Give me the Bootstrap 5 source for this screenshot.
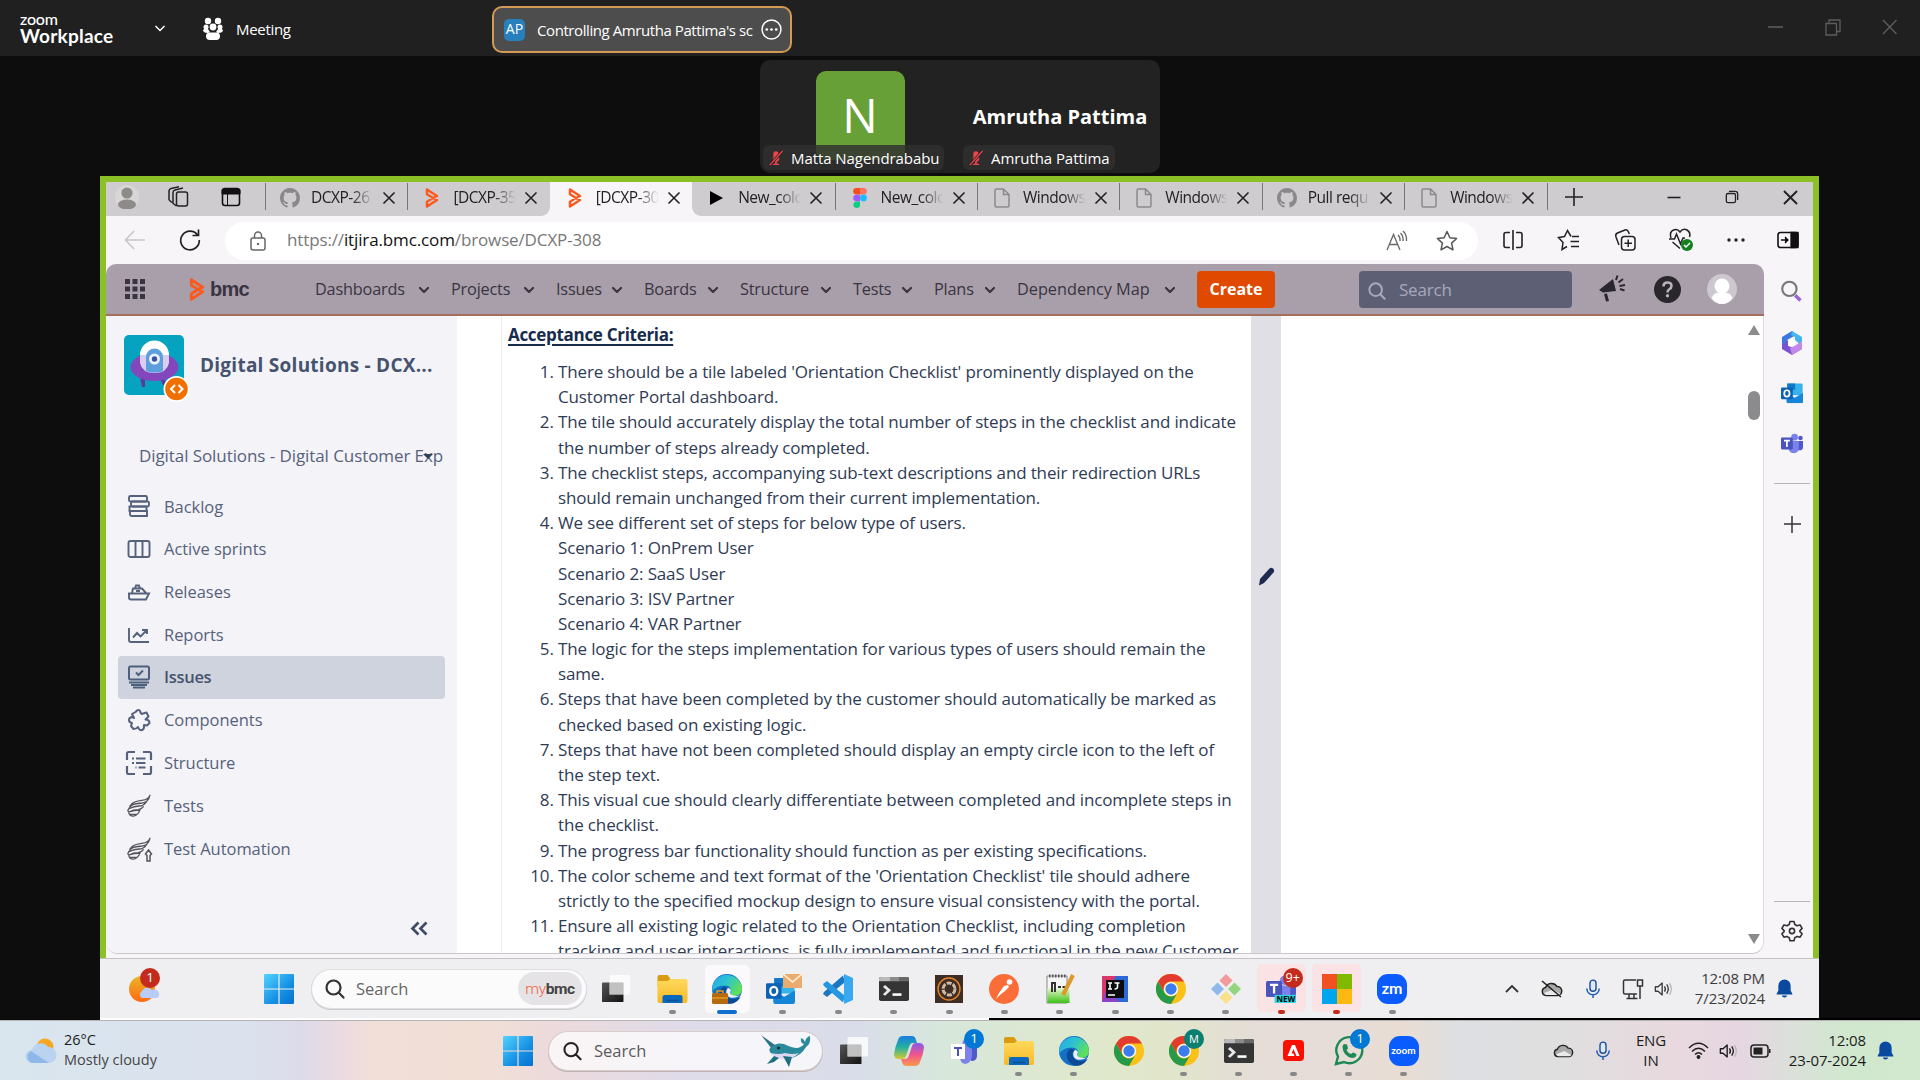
<!DOCTYPE html>
<html lang="en">
<head>
<meta charset="utf-8">
<meta name="viewport" content="width=device-width, initial-scale=1">
<title>Zoom Workplace</title>
<link href="https://cdn.jsdelivr.net/npm/bootstrap@5.3.0/dist/css/bootstrap.min.css" rel="stylesheet">
<style>
body{width:1920px;height:1080px;overflow:hidden;background:#0d0d0d;font-family:"Open Sans","Noto Sans",sans-serif;color:#222;line-height:1.2}
svg{display:block;flex:none;overflow:visible}
.i12{width:12px;height:12px}.i16{width:16px;height:16px}.i20{width:20px;height:20px}.i22{width:22px;height:22px}.i24{width:24px;height:24px}.i28{width:28px;height:28px}.i30{width:30px;height:30px}
.spot{display:flex;align-items:center;justify-content:center;flex:none;position:relative}
/* zoom bar */
.zoombar{height:56px;background:#202020;color:#fff}
.zlogo{width:110px;padding-top:0}
.zlogo .z1{font:500 16px/15px Lato,sans-serif;letter-spacing:-.2px}
.zlogo .z2{font:700 19px/20px Lato,sans-serif;letter-spacing:.25px}
.zmeet{width:255px;font-size:15px;letter-spacing:-.3px;margin-left:12px;padding-top:2px}
.share-pill{width:300px;height:47px;margin-left:35px;margin-top:3px;border:2px solid #d39a55;border-radius:10px;background:#4d4d4d;font-size:15px;padding-left:10px}
.share-pill .ap{width:21px;height:22px;border-radius:5px;background:#287fbd;font-size:14px}
.share-text{margin-left:12px;letter-spacing:-.42px}
.zbtns{color:#5c5c5c;gap:41px;margin-right:22px;height:50px}
/* participants */
.people{width:400px;height:113px;margin:4px 0 3px 760px;background:#222;border-radius:10px;color:#fff;overflow:hidden}
.people .tile{width:200px;height:113px;position:relative}
.bigN{width:89px;height:89px;background:#68a038;border-radius:10px;font-size:47px;margin-top:11px}
.bigname{font-weight:700;font-size:20px;letter-spacing:0;margin-top:45px}
.nametag{position:absolute;left:3px;bottom:3px;height:25px;border-radius:6px;background:rgba(48,48,48,.82);font-size:15px;letter-spacing:-.07px;padding:0 5px 0 5px;gap:7px}
/* shared screen */
.shared{width:1719px;margin-left:100px;height:842px}
.edgewin{height:782px;border:6px solid #8cc027;border-bottom:0;background:#f8f5f9}
.tabs{height:34px;background:#cfcccf;color:#222}
.tabs>.spot{padding-bottom:4px}
.tabitem{width:142.4px;height:34px;padding:0 0 3px 14px;font-size:15.5px;border-left:1.5px solid #77757a;border-image:linear-gradient(#cfcccf 6%,#77757a 6%,#77757a 80%,#cfcccf 80%) 1}
.tabitem .ttl{width:68px;margin-left:11px;margin-right:2px;white-space:nowrap;letter-spacing:-.5px;-webkit-mask-image:linear-gradient(90deg,#000 60%,transparent 92%);mask-image:linear-gradient(90deg,#000 60%,transparent 92%)}
.tabitem.on{background:#f8f5f9;border-image:none;border:0;padding-left:15px}
.tabitem.on + .tabitem{border-image:none;border-left:0;border-bottom-left-radius:9px;padding-left:15px}
.tabitem.pre{border-bottom-right-radius:9px}
.tabs .under{background:#f8f5f9;display:flex}
.tabs .under .tabitem:not(.on){background:#cfcccf}
.tabitem.adder{width:54px;padding:0 0 4px}
.addr{height:48px;color:#222}
.addr .pill{width:1257px;height:38px;margin-top:1px;border-radius:19px;background:#fff;font-size:17px;letter-spacing:-.13px;color:#777}
.addr .pill b{font-weight:400;color:#111}
.jnav{width:1658px;height:52px;background:#a89fab;border-bottom:2px solid #a66e5e;border-radius:10px 10px 0 0;color:#3a3440;font-size:16.3px;letter-spacing:-.2px}
.jnav .mi{justify-content:space-between;padding-right:21px;padding-top:2px}
.jsearch{width:213px;height:37px;border-radius:4px;background:#5d6075;color:#a9a9bb;font-size:17px;padding-top:2px;margin-top:1px}
.btn-create{width:78px;height:37px;background:#e04a00;color:#fff;border-radius:4px;font-weight:700;font-size:16px;padding:0}
.bmctext{font:700 20px "Liberation Sans",sans-serif;letter-spacing:-.8px;margin-left:5px}
.page{width:1658px;height:638px;background:#fff;border-bottom:1px solid #c9c7cc;border-right:1px solid #dddbe0;border-radius:0 0 12px 12px;overflow:hidden}
.jside{width:351px;background:#f4f3f8;color:#56627b;font-size:17px}
.proj{height:60px;margin:19px 0 0 18px}
.projicon{width:60px;height:60px}
.proj .pt{font-weight:700;font-size:19px;color:#46536f;margin-left:16px;letter-spacing:.25px}
.boardsel{margin:48px 0 16px 33px;height:26px;width:304px;position:relative;overflow:hidden;font-size:17px;letter-spacing:-.08px}
.boardsel svg{position:absolute;right:9px;top:9px}
.jside .list-group{margin-left:12px;width:327px}
.jside .list-group-item{height:42.93px;background:none;border:0;border-radius:4px;padding:0 0 0 9px;color:#56627b;font-size:16.5px;letter-spacing:-.04px}
.jside .list-group-item.active{background:#cfd3dd;font-weight:600;color:#46536f;letter-spacing:-.3px}
.jside .list-group-item svg{width:24px;height:24px;margin-right:13px}
.collapser{margin:51px 29px 0 auto}
.doc{width:750px;margin-left:44px;border-left:1px solid #f1ebee;padding:6px 0 0 6px;color:#2f3b55;font-size:17px;line-height:25.186px}
.doc h6{font-size:17px;line-height:25px;font-weight:700;text-decoration:underline;text-underline-offset:3px;text-decoration-thickness:2px;color:#172b4d;margin:0 0 12px;letter-spacing:-.3px}
.doc ol{margin:0;padding:0 0 0 50px;white-space:nowrap;letter-spacing:-.145px}
.gutter{width:30px;background:#e0dfe6;padding:251px 0 0 6px}
.sbar{width:18px;margin-left:auto;padding:9px 0 9px}
.sbar .thumb{width:12px;height:29px;border-radius:6px;background:#8b8b8d;margin-top:56px}
.erail{width:49px;color:#333;padding-left:6px}
.erail hr{width:36px;margin:0;border-color:#8f8d92;opacity:.6}
/* remote taskbar */
.rtask{height:60px;background:#efeef0;border-top:1px solid #c3c2c6;color:#3d3d3d}
.rsearch{width:274px;height:38px;border-radius:19px;background:#fbfbfb;box-shadow:0 0 0 1px #dedde0,0 1px 0 1px #cbcacd;font-size:16.5px;color:#666}
.mybmc{width:64px;height:33px;border-radius:17px;background:#e6e3e7;font:700 15.5px Roboto,sans-serif;color:#444;letter-spacing:-.4px}
.mybmc i{font:300 15.5px Roboto,sans-serif;color:#f0603a}
.rt>.spot{width:55.4px;height:58px}
.lt>.spot{width:55px;height:60px}
.dotmark::after{content:"";position:absolute;width:7px;height:4px;border-radius:2px;background:#888;left:calc(50% - 3.5px);top:50px}
.lt .dotmark::after{top:51px}
.dotmark.red::after{background:#c42b1c}
.dotmark.wide::after{width:20px;left:calc(50% - 10px);background:#0f6fce}
.hl::before{content:"";position:absolute;inset:5px 5.5px 5px;border-radius:5px;background:#fbf9fc}
.hl.red::before{background:#fbe3e5;inset:4px 3px 6px}
.hl svg{position:relative}
.bdg{position:absolute;width:20px;height:20px;border-radius:50%;color:#fff;font-size:13.5px;display:flex;align-items:center;justify-content:center}
.clock{font-size:15px;line-height:20px;text-align:right;letter-spacing:-.1px}
.zmicon{width:30px;height:30px;border-radius:11px;background:#0b5cff;color:#fff;font:700 16px Lato,sans-serif;padding-bottom:2px}
.zmicon.zmbig{font-size:10px}
.seam{height:2px;margin-left:100px;background:linear-gradient(90deg,#fff 889px,#000 889px)}
/* local taskbar */
.ltask{height:60px;border-top:1px solid #b5b3b5;color:#1d1d1d;background:linear-gradient(90deg,#d9e6ee 0,#dbe1ed 250px,#dddbe9 300px,#ecdbe0 345px,#f1dfd8 370px,#f1dfd6 480px,#ecdadd 560px,#dfdbe8 680px,#d9dde9 860px,#d7e7dc 940px,#dfe8cc 1080px,#e1e6cb 1170px,#e5dcd8 1260px,#e6ddd8 1350px,#e9ddd3 1400px,#dde0e3 1465px,#e0dfdf 1560px,#e8d8de 1680px,#e6d6e2 1740px,#d9e1d8 1800px,#d0e8ce 1850px,#d2e8cf 1920px)}
.lsearch{width:273px;height:38px;border-radius:19px;background:rgba(252,251,252,.8);box-shadow:0 0 0 1px #d9ccca,0 1px 0 1px #beb4b4;font-size:16.5px;color:#5a5a5a}
.wtext{font-size:14.5px;line-height:20px;padding-bottom:1px}
.wtext span{color:#444}
</style>
</head>
<body>
<svg width="0" height="0" class="position-absolute">
<defs>
<linearGradient id="gwin" x1="0" y1="0" x2="1" y2="1"><stop offset="0" stop-color="#55d3ff"/><stop offset=".6" stop-color="#1590e4"/><stop offset="1" stop-color="#0670cf"/></linearGradient>
<linearGradient id="gedge" x1="0" y1="0" x2="1" y2=".5"><stop offset="0" stop-color="#2aa5e8"/><stop offset=".5" stop-color="#2bc3d2"/><stop offset="1" stop-color="#5fe05a"/></linearGradient>
<linearGradient id="gcopA" x1="0" y1="0" x2="0" y2="1"><stop offset="0" stop-color="#1a7de0"/><stop offset=".5" stop-color="#25b2a0"/><stop offset="1" stop-color="#d8c92c"/></linearGradient>
<linearGradient id="gcopB" x1="0" y1="0" x2="0" y2="1"><stop offset="0" stop-color="#8a5be8"/><stop offset=".5" stop-color="#f0548e"/><stop offset="1" stop-color="#fb9a4c"/></linearGradient>
<linearGradient id="gfold" x1="0" y1="0" x2="0" y2="1"><stop offset="0" stop-color="#ffd95c"/><stop offset="1" stop-color="#f7b924"/></linearGradient>
<linearGradient id="gdark" x1="0" y1="0" x2="1" y2="1"><stop offset="0" stop-color="#555"/><stop offset="1" stop-color="#111"/></linearGradient>
<linearGradient id="gsun" x1="0" y1="0" x2="0" y2="1"><stop offset="0" stop-color="#e9b62a"/><stop offset="1" stop-color="#ff6a10"/></linearGradient>
<linearGradient id="gnpp" x1="0" y1="0" x2="0" y2="1"><stop offset="0" stop-color="#e8f6d0"/><stop offset="1" stop-color="#3cc214"/></linearGradient>
</defs>
<symbol id="chev" viewBox="0 0 12 12"><path d="M2 4l4 4 4-4" fill="none" stroke="currentColor" stroke-width="2.2" stroke-linecap="round" stroke-linejoin="round"/></symbol>
<symbol id="xx" viewBox="0 0 16 16"><path d="M2.500 2.500l11 11m0-11l-11 11" fill="none" stroke="currentColor" stroke-width="1.600"/></symbol>
<symbol id="win" viewBox="0 0 30 30"><path d="M0 1q0-1 1-1h13.400v14.400H0zM15.600 0H29q1 0 1 1v13.400H15.600zM0 15.600h14.400V30H1q-1 0-1-1zM15.600 15.600H30V29q0 1-1 1H15.600z" fill="url(#gwin)"/></symbol>
<symbol id="mag" viewBox="0 0 20 20"><path d="M8.500 1.500a7 7 0 100 14 7 7 0 000-14zM13.600 13.600l4.900 5" fill="none" stroke="currentColor" stroke-width="2.200" stroke-linecap="round"/></symbol>
<symbol id="gh" viewBox="0 0 16 16"><path fill="#8a888c" d="M8 0C3.58 0 0 3.58 0 8c0 3.54 2.29 6.53 5.47 7.59.4.07.55-.17.55-.38 0-.19-.01-.82-.01-1.49-2.01.37-2.53-.49-2.69-.94-.09-.23-.48-.94-.82-1.13-.28-.15-.68-.52-.01-.53.63-.01 1.08.58 1.23.82.72 1.21 1.87.87 2.33.66.07-.52.28-.87.51-1.07-1.78-.2-3.64-.89-3.64-3.95 0-.87.31-1.59.82-2.15-.08-.2-.36-1.02.08-2.12 0 0 .67-.21 2.2.82.64-.18 1.32-.27 2-.27s1.36.09 2 .27c1.53-1.04 2.2-.82 2.2-.82.44 1.1.16 1.92.08 2.12.51.56.82 1.27.82 2.15 0 3.07-1.87 3.75-3.65 3.95.29.25.54.73.54 1.48 0 1.07-.01 1.93-.01 2.2 0 .21.15.46.55.38A8.01 8.01 0 0016 8c0-4.42-3.58-8-8-8z"/></symbol>
<symbol id="bmc" viewBox="0 0 14 20"><path d="M2 1.500v4.800L8 10l4-2zM2 18.500v-4.800L8 10l4 2z" fill="none" stroke="#fa5a1e" stroke-width="2.500" stroke-linejoin="round"/></symbol>
<symbol id="figma" viewBox="0 0 14 20"><path d="M3.500 0H7v6.600H3.500a3.300 3.300 0 010-6.600z" fill="#f24e1e"/><path d="M7 0h3.500a3.300 3.300 0 010 6.600H7z" fill="#ff7262"/><path d="M3.500 6.700H7v6.600H3.500a3.300 3.300 0 010-6.600z" fill="#a259ff"/><circle cx="10.500" cy="10" r="3.400" fill="#1abcfe"/><path d="M3.500 13.400H7v3.300a3.300 3.300 0 11-3.500-3.300z" fill="#0acf83"/></symbol>
<symbol id="file" viewBox="0 0 16 20"><path d="M2.500 1h7L15 6.500V17.500a1.500 1.500 0 01-1.500 1.500h-11A1.500 1.500 0 011 17.500v-15A1.500 1.500 0 012.500 1zM9.500 1v5.500H15" fill="none" stroke="#8b898c" stroke-width="1.500"/></symbol>
<symbol id="person" viewBox="0 0 24 24"><circle cx="12" cy="12" r="12" fill="#d9d6d6"/><circle cx="12" cy="8" r="5.600" fill="#8d8a89"/><ellipse cx="12" cy="19.500" rx="9" ry="5" fill="#8d8a89"/></symbol>
<symbol id="micoff" viewBox="0 0 16 18"><path d="M8 1.500a3 3 0 013 3v5a3 3 0 01-6 0v-5a3 3 0 013-3zM4 9.500h8l-1.500 3.500h-5zM7 13h2v2.500h2.500V17h-7v-1.500H7z" fill="#f0444c"/><path d="M15.500 1L1 17" stroke="#222" stroke-width="3"/><path d="M15.500 1L1 17" stroke="#f0444c" stroke-width="1.600"/></symbol>
<symbol id="mic" viewBox="0 0 18 24"><rect x="5.600" y="2" width="6.800" height="12.500" rx="3.400" fill="#dfe9f5" stroke="#1d4f9c" stroke-width="1.600"/><path d="M2 11.500a7 7 0 0014 0M9 18.500V22" fill="none" stroke="#1f5fb4" stroke-width="1.700"/></symbol>
<symbol id="spk" viewBox="0 0 22 18"><path d="M1.500 6.500h3L9 2.500v13l-4.500-4h-3zM11.500 6q2 3 0 6M14 4q3.500 5 0 10" fill="none" stroke="currentColor" stroke-width="1.500" stroke-linejoin="round"/><path d="M17 2.500q4 6.500 0 13" fill="none" stroke="#b5b5b5" stroke-width="1.400"/></symbol>
<symbol id="bell" viewBox="0 0 18 20"><path d="M9 .500a6.500 6.500 0 016.500 6.500v5l1.800 3.500v.8H.700v-.8L2.500 12V7A6.500 6.500 0 019 .500zM6.300 17.500h5.400a2.700 2 0 01-5.400 0z" fill="#0a4a9e"/></symbol>
<symbol id="cloudg" viewBox="0 0 22 16"><path d="M5 14.500a4 4 0 01-.5-7.900A6.500 6.500 0 0116 5.500a4.500 4.500 0 01.5 9z" fill="#a9a9a9" stroke="#222" stroke-width="1.500"/><path d="M3 12l9-3.500 7.500 4.500-2 1H5z" fill="#e9e9e9"/></symbol>
<symbol id="term" viewBox="0 0 30 28"><rect width="30" height="28" rx="2" fill="#353535"/><path d="M2 0h9v5H0V2q0-2 2-2z" fill="#b9b9b9"/><path d="M11 0h9v5h-9z" fill="#8b8b8b"/><path d="M20 0h8q2 0 2 2v3H20z" fill="#686868"/><path d="M5 10.500l5 5-5 5.500" fill="none" stroke="#e8e8e8" stroke-width="3"/><path d="M13.500 20.500h9" stroke="#fff" stroke-width="3"/></symbol>
<symbol id="folder" viewBox="0 0 30 28"><path d="M0 2q0-2 2-2h8l3 4h15v8H0z" fill="#d99b12"/><path d="M13 4h15q2 0 2 2v20q0 2-2 2H2q-2 0-2-2V6h10z" fill="url(#gfold)"/><path d="M5 28v-6q0-2 2-2h16q2 0 2 2v6z" fill="#0b69bd"/><path d="M9 25.500h12" stroke="#0a4f93" stroke-width="1.500"/></symbol>
<symbol id="edge" viewBox="0 0 30 30"><circle cx="15" cy="15" r="15" fill="#1470c5"/><path d="M.300 13A15 15 0 0130 15c0 5-4 7-8 7-3.500 0-4.500-1.500-3.500-3 2-3-.5-7.500-5.500-7.500C6 11.500 1 15 .300 18z" fill="url(#gedge)"/><path d="M11 13c-6 5-3 15 6 16.800C23 30 27 26 28.500 23c-5 3.500-12 2.500-14.500-2-1.500-3-.5-5.500 1-7-1.500-1.500-3-1.500-4-1z" fill="#0d4a96"/><path d="M16 14c-3 3-2 8 2 9.500 4 1 8-.5 10.500-2.500-3 1.500-7.500 1-9.500-.5-1.500-1.500-.5-3 0-4-.3-1.300-1.500-2.500-3-2.500z" fill="#eef"/></symbol>
<symbol id="chrome" viewBox="-15 -15 30 30"><circle r="15" fill="#fbc116"/><path d="M-13-7.500A15 15 0 0113-7.500H0A7.500 7.500 0 00-6.500 3.700z" fill="#e33b2e"/><path d="M-13-7.500A15 15 0 000 15L6.500 3.700A7.500 7.500 0 01-6.500 3.700z" fill="#269a48"/><circle r="7" fill="#fff"/><circle r="5.700" fill="#3b7ded"/></symbol>
<symbol id="tview" viewBox="0 0 30 30"><rect y="8" width="23" height="21" rx="1" fill="url(#gdark)"/><rect x="8" y="0" width="22" height="21" rx="1" fill="#fff" opacity=".78"/><path d="M8 8h15v13H8z" fill="#b9b9b9" opacity=".7"/></symbol>
<symbol id="teams" viewBox="0 0 26 24"><circle cx="16" cy="4.500" r="4" fill="#7b83eb"/><circle cx="23" cy="5.500" r="2.700" fill="#5059c9"/><path d="M19 9h7v7q0 4-4 4h-3z" fill="#5059c9"/><path d="M9 9h12v8q0 6-6 6.500-6-.5-6-6.500z" fill="#7b83eb"/><rect y="5" width="14" height="14" rx="1.300" fill="#4b53bc"/><path d="M3.500 8.500h7M7 8.500V16" stroke="#fff" stroke-width="2"/></symbol>
<symbol id="outl" viewBox="0 0 28 26"><path d="M8 1h18q1.500 0 1.500 1.500V16H7z" fill="#35b3ea"/><path d="M8 1h10v8H8z" fill="#1277c9"/><path d="M7 13l10.500 6L28 13v11q0 2-2 2H9q-2 0-2-2z" fill="#1585d8"/><rect y="6" width="15" height="15" rx="1.300" fill="#0c62b5"/><ellipse cx="7.500" cy="13.500" rx="3.400" ry="4" fill="none" stroke="#fff" stroke-width="2.200"/></symbol>
<symbol id="restore" viewBox="0 0 16 16"><rect x="1.500" y="4" width="10.500" height="10.500" rx="2" fill="none" stroke="currentColor" stroke-width="1.500"/><path d="M4.500 1.500h7q3 0 3 3v7" fill="none" stroke="currentColor" stroke-width="1.500"/></symbol>
<symbol id="xray" viewBox="0 0 26 24"><path d="M25 0q-1 5-9 6-9 1-12 5 6-2 11-2 8 0 10-9M21 7.500Q18 9 13 9 4 10 2 15q6-3 11-3 5 0 8-4.500M2 15q-2 2.500 0 3.500 5-2.500 10-2.500 4-.5 6-3.500M2 18.500q0 4.500 5 4.500 5-1 7-6.500-6 0-12 2zM3 21h8" fill="none" stroke="#53545c" stroke-width="1.400"/></symbol>
</svg>

<!-- Meeting window header -->
<header class="zoombar d-flex align-items-center ps-3">
  <div class="zlogo ms-1"><div class="z1">zoom</div><div class="z2">Workplace</div></div>
  <div class="spot" style="width:60px"><svg width="12" height="12"><path d="M1.500 4l4.500 4.500L10.500 4" fill="none" stroke="#fff" stroke-width="1.500"/></svg></div>
  <div class="zmeet d-flex align-items-center">
    <svg class="me-2" width="22" height="24" viewBox="0 0 22 24" fill="#fff"><circle cx="6" cy="4" r="3.200"/><circle cx="16" cy="4" r="3.200"/><circle cx="11" cy="10" r="3.400"/><circle cx="4" cy="10" r="2.500"/><circle cx="18" cy="10" r="2.500"/><path d="M1 13q2-2 5-1l2 3-2 1q-5 0-5-3zM21 13q-2-2-5-1l-2 3 2 1q5 0 5-3z"/><rect x="4" y="15.500" width="14" height="7.500" rx="3.700"/></svg>
    <span class="ms-1">Meeting</span>
  </div>
  <div class="share-pill d-flex align-items-center">
    <span class="ap spot">AP</span><span class="text-nowrap share-text">Controlling Amrutha Pattima's sc</span>
    <svg width="21" height="21" viewBox="0 0 20 20" class="ms-auto me-2"><circle cx="10" cy="10" r="9" fill="none" stroke="#fff" stroke-width="1.400"/><g fill="#fff"><circle cx="5.500" cy="10" r="1.300"/><circle cx="10" cy="10" r="1.300"/><circle cx="14.500" cy="10" r="1.300"/></g></svg>
  </div>
  <div class="zbtns d-flex align-items-center ms-auto">
    <svg class="i16"><path d="M0 7h15" stroke="currentColor" stroke-width="1.600"/></svg>
    <svg class="i16"><path d="M1 3.500h10.500V15H1zM4 3V0h11v11.500h-3" fill="none" stroke="currentColor" stroke-width="1.300"/></svg>
    <svg class="i16"><path d="M1 0l13.500 14m0-14L1 14" stroke="currentColor" stroke-width="1.400"/></svg>
  </div>
</header>

<section class="people d-flex">
  <div class="tile d-flex justify-content-center"><div class="bigN spot">N</div><div class="nametag d-flex align-items-center text-nowrap"><svg class="i16"><use href="#micoff"/></svg>Matta Nagendrababu</div></div>
  <div class="tile d-flex justify-content-center"><div class="bigname text-nowrap">Amrutha Pattima</div><div class="nametag d-flex align-items-center text-nowrap"><svg class="i16"><use href="#micoff"/></svg>Amrutha Pattima</div></div>
</section>

<main class="shared d-flex flex-column">
 <div class="edgewin">
  <div class="tabs d-flex align-items-center">
    <div class="spot" style="width:42px"><svg class="i24"><use href="#person"/></svg></div>
    <div class="spot" style="width:60px"><svg class="i22" viewBox="0 0 22 22" fill="none" stroke="#222" stroke-width="1.500"><rect x="9.500" y="6" width="11" height="14" rx="2"/><path d="M6 17V6.500q0-2 2-2.500l8-2M2 14V5q0-2 2-2.500L12 .800M9.500 20L5.500 17M5 16.500L2 14"/></svg></div>
    <div class="spot" style="width:57px;padding-right:12px"><svg class="i20" viewBox="0 0 20 20"><rect x="1.500" y="1.500" width="17" height="17" rx="2.500" fill="none" stroke="#111" stroke-width="1.600"/><path d="M1 2.500h18V7H1zM6.500 7v11.500" stroke="#111" fill="#111"/></svg></div>
    <div class="under">
    <div class="tabitem d-flex align-items-center"><svg class="i20"><use href="#gh"/></svg><span class="ttl">DCXP-26</span><svg class="i16"><use href="#xx"/></svg></div>
    <div class="tabitem pre d-flex align-items-center"><svg class="i20"><use href="#bmc"/></svg><span class="ttl">[DCXP-35</span><svg class="i16"><use href="#xx"/></svg></div>
    <div class="tabitem on d-flex align-items-center"><svg class="i20"><use href="#bmc"/></svg><span class="ttl">[DCXP-30</span><svg class="i16"><use href="#xx"/></svg></div>
    <div class="tabitem d-flex align-items-center"><svg class="i20" viewBox="0 0 20 20"><path d="M3 3l13 7-13 7z"/></svg><span class="ttl">New_colo</span><svg class="i16"><use href="#xx"/></svg></div>
    <div class="tabitem d-flex align-items-center"><svg class="i20"><use href="#figma"/></svg><span class="ttl">New_colo</span><svg class="i16"><use href="#xx"/></svg></div>
    <div class="tabitem d-flex align-items-center"><svg class="i20"><use href="#file"/></svg><span class="ttl">Windows</span><svg class="i16"><use href="#xx"/></svg></div>
    <div class="tabitem d-flex align-items-center"><svg class="i20"><use href="#file"/></svg><span class="ttl">Windows</span><svg class="i16"><use href="#xx"/></svg></div>
    <div class="tabitem d-flex align-items-center"><svg class="i20"><use href="#gh"/></svg><span class="ttl">Pull requ</span><svg class="i16"><use href="#xx"/></svg></div>
    <div class="tabitem d-flex align-items-center"><svg class="i20"><use href="#file"/></svg><span class="ttl">Windows</span><svg class="i16"><use href="#xx"/></svg></div>
    </div>
    <div class="spot tabitem adder"><svg class="i20"><path d="M10 1v18M1 10h18" stroke="#222" stroke-width="1.600"/></svg></div>
    <div class="spot ms-auto" style="width:58px"><svg class="i16"><path d="M1.500 8.500h13" stroke="#222" stroke-width="1.600"/></svg></div>
    <div class="spot" style="width:58px"><svg width="14" height="14"><use href="#restore"/></svg></div>
    <div class="spot" style="width:58px;margin-right:-6px"><svg width="19" height="19"><use href="#xx"/></svg></div>
  </div>
  <div class="addr d-flex align-items-center">
    <div class="spot" style="width:58px"><svg class="i20"><path d="M20 10H1M9 1l-8.500 9L9 19" fill="none" stroke="#c9c6ca" stroke-width="1.600"/></svg></div>
    <div class="spot" style="width:52px"><svg class="i22"><path d="M18.500 6A9.300 9.300 0 1020.300 11M19.500.5v6h-6" fill="none" stroke="#222" stroke-width="1.700"/></svg></div>
    <div class="pill d-flex align-items-center" style="margin-left:9px">
      <div class="spot" style="width:66px"><svg width="16" height="20" viewBox="0 0 16 20"><rect x="1" y="7" width="14" height="12" rx="2" fill="none" stroke="#666" stroke-width="1.500"/><path d="M4.500 7V4.500a3.500 3.500 0 017 0V7" fill="none" stroke="#666" stroke-width="1.500"/><circle cx="8" cy="13" r="1.200" fill="#666"/></svg></div>
      <span class="url" style="margin-left:-4px">https://<b>itjira.bmc.com</b>/browse/DCXP-308</span>
      <div class="spot ms-auto" style="width:50px"><svg class="i22" viewBox="0 0 22 22" fill="none" stroke="#666" stroke-width="1.300"><path d="M1 20L7.500 4.500 14 20M3.500 14.500h8M12 5q2.500 2.500 2 6M14.500 3q3 3 2.500 8M17 1q4 4 3.500 10"/></svg></div>
      <div class="spot" style="width:50px;margin-right:6px"><svg class="i22" viewBox="0 0 22 22"><path d="M11 1.500l2.900 6.200 6.700.8-5 4.600 1.400 6.700L11 16.500l-6 3.300 1.400-6.700-5-4.600 6.700-.8z" fill="none" stroke="#555" stroke-width="1.500" stroke-linejoin="round"/></svg></div>
    </div>
    <div class="spot" style="width:56px;margin-left:7px"><svg class="i20" fill="none" stroke="#222" stroke-width="1.600"><path d="M7 2.500H3q-2 0-2 2v11q0 2 2 2h4M13 2.500h4q2 0 2 2v11q0 2-2 2h-4M10 0v20"/></svg></div>
    <div class="spot" style="width:56px"><svg class="i22" fill="none" stroke="#222" stroke-width="1.500"><path d="M13 7.500L9.500 1.500l-3 6-6 1 4.500 5-1 7 5-3M14 7.500h7M12.500 12.500H21M13 17.500h8"/></svg></div>
    <div class="spot" style="width:56px"><svg class="i22" fill="none" stroke="#222" stroke-width="1.500"><rect x="7.500" y="7.500" width="13.500" height="13.500" rx="3"/><path d="M14.200 10.500v7.500M10.500 14.200H18M5 16L2 8q-1-3 1.500-4L11 1q2.500-.7 3.500 2l.8 2"/></svg></div>
    <div class="spot" style="width:56px"><svg class="i24" viewBox="0 0 24 24" fill="none" stroke="#222" stroke-width="1.500"><path d="M2 10Q0 4 4.500 2 8.500.500 11 4q3-4 7-2 4 2.500 2.500 7M0 11h5.500l2-5 4 10 2.500-6h2M3.500 14l7.500 6.500"/><circle cx="18" cy="17" r="6" fill="#12801c" stroke="none"/><path d="M15 17l2 2 4-4" stroke="#fff"/></svg></div>
    <div class="spot" style="width:54px"><svg class="i20" fill="#222"><circle cx="3" cy="10" r="1.700"/><circle cx="10" cy="10" r="1.700"/><circle cx="17" cy="10" r="1.700"/></svg></div>
    <div class="spot" style="width:50px"><svg class="i20" viewBox="0 0 20 20"><rect x="0" y="2.500" width="20" height="15" rx="2.500" fill="none" stroke="#111" stroke-width="1.600"/><path d="M13 2.500h7v15h-7zM3 10h6.500M7 7l3 3-3 3" fill="#111" stroke="#111" stroke-width="1.300"/></svg></div>
  </div>
  <div class="d-flex">
   <div>
    <nav class="jnav d-flex align-items-center">
      <div class="spot" style="width:58px"><svg class="i20" fill="#3a3440"><path d="M0 0h5v5H0zM7.500 0h5v5h-5zM15 0h5v5h-5zM0 7.500h5v5H0zM7.500 7.500h5v5h-5zM15 7.500h5v5h-5zM0 15h5v5H0zM7.500 15h5v5h-5zM15 15h5v5h-5z"/></svg></div>
      <div class="d-flex align-items-center" style="width:151px;padding-left:25px"><svg width="16" height="23"><use href="#bmc"/></svg><span class="bmctext">bmc</span></div>
      <div class="mi d-flex align-items-center" style="width:136px">Dashboards <svg class="i12"><use href="#chev"/></svg></div>
      <div class="mi d-flex align-items-center" style="width:105px">Projects <svg class="i12"><use href="#chev"/></svg></div>
      <div class="mi d-flex align-items-center" style="width:88px">Issues <svg class="i12"><use href="#chev"/></svg></div>
      <div class="mi d-flex align-items-center" style="width:96px">Boards <svg class="i12"><use href="#chev"/></svg></div>
      <div class="mi d-flex align-items-center" style="width:113px">Structure <svg class="i12"><use href="#chev"/></svg></div>
      <div class="mi d-flex align-items-center" style="width:81px">Tests <svg class="i12"><use href="#chev"/></svg></div>
      <div class="mi d-flex align-items-center" style="width:83px">Plans <svg class="i12"><use href="#chev"/></svg></div>
      <div class="mi d-flex align-items-center text-nowrap" style="width:180px;letter-spacing:-.02px">Dependency Map <svg class="i12"><use href="#chev"/></svg></div>
      <button class="btn btn-create">Create</button>
      <div class="jsearch d-flex align-items-center" style="margin-left:84px;padding-left:9px"><svg width="18" height="18" style="margin-right:13px"><use href="#mag"/></svg>Search</div>
      <div class="spot" style="width:58px;margin-left:11px"><svg class="i28" viewBox="0 0 28 28" fill="#2b272e"><path d="M1 15L15 4l3 12-13 1.500zM6 19l3-.500L11 26l-3 .500z"/><path d="M18 5l1.500-4.500M20.500 7.500L25 4M21.500 11l5.500-1M22 14l4.500 1.500" stroke="#2b272e" stroke-width="2"/></svg></div>
      <div class="spot" style="width:52px"><svg width="27" height="27" viewBox="0 0 27 27"><circle cx="13.500" cy="13.500" r="13.500" fill="#29262c"/><path d="M9.500 10.500q0-4 4-4t4 3.500q0 2-2.500 3.500-1.500 1-1.500 3" fill="none" stroke="#b9b0bb" stroke-width="2.600"/><circle cx="13.500" cy="19.700" r="1.700" fill="#b9b0bb"/></svg></div>
      <div class="spot" style="width:58px"><svg class="i30" viewBox="0 0 30 30"><circle cx="15" cy="15" r="15" fill="#cdc7d0"/><circle cx="15" cy="12" r="7.500" fill="#fff"/><path d="M4.500 24q2-6 10.500-6t10.500 6q-4 6-10.500 6T4.500 24z" fill="#fff"/></svg></div>
    </nav>
    <div class="page d-flex">
     <aside class="jside">
      <div class="proj d-flex align-items-center">
        <svg class="projicon" viewBox="0 0 60 60"><rect width="60" height="60" rx="5" fill="#05a3bf"/><path d="M16 42l2 10h3V43zM36 44l3 6h4l-3-8z" fill="#5e3a96"/><ellipse cx="30.500" cy="32" rx="24" ry="14" fill="#8247bd"/><path d="M16 22a14.500 14.500 0 0129 0v6q-2 10-14.500 10T16 28z" fill="#d9cdf0"/><path d="M16 20a14.500 14.500 0 0129 0z" fill="#fff"/><path d="M22 22a8.500 8.500 0 0117 0v14q-8.500 3-17 0z" fill="#5d9fdc"/><circle cx="30.500" cy="24" r="5.500" fill="#eaf2fb"/><circle cx="30.500" cy="24" r="2.700" fill="#3a53a0"/><circle cx="52.500" cy="54" r="13" fill="#fff"/><circle cx="52.500" cy="54" r="11.300" fill="#ef7000"/><path d="M51 50l-4 4 4 4M54.500 50l4 4-4 4" fill="none" stroke="#fff" stroke-width="2"/></svg>
        <span class="pt text-nowrap">Digital Solutions - DCX...</span>
      </div>
      <div class="boardsel text-nowrap d-flex align-items-center">Digital Solutions - Digital Customer Exp<svg width="12" height="10"><path d="M1 2l5 5 5-5z" fill="#333f58"/></svg></div>
      <div class="list-group list-group-flush">
        <a class="list-group-item d-flex align-items-center"><svg viewBox="0 0 24 24" fill="none" stroke="#56627b" stroke-width="1.900"><rect x="2" y="2" width="18" height="5.500" rx="1.500"/><rect x="4" y="7.500" width="18" height="5" rx="1.500"/><path d="M2.500 12.500h17V17h-17zM3 17h17v5H4.500Q3 22 3 20.500z"/></svg>Backlog</a>
        <a class="list-group-item d-flex align-items-center"><svg viewBox="0 0 24 24" fill="none" stroke="#56627b" stroke-width="1.900"><rect x="1.500" y="4" width="21" height="16" rx="2"/><path d="M8.500 4v16M15.500 4v16"/></svg>Active sprints</a>
        <a class="list-group-item d-flex align-items-center"><svg viewBox="0 0 24 24" fill="none" stroke="#56627b" stroke-width="1.900"><path d="M2 13.500h20l-3 6H4q-2 0-2-2zM5 13l1-4.500h9l4 4.500M8 8.500l1-3h3l1 3M9 11h4"/></svg>Releases</a>
        <a class="list-group-item d-flex align-items-center"><svg viewBox="0 0 24 24" fill="none" stroke="#56627b" stroke-width="1.900"><path d="M2 5v12q0 2 2 2h18M6 14.500l4-4.500 3.500 3.500L19 8M15 7h5v4"/></svg>Reports</a>
        <a class="list-group-item active d-flex align-items-center"><svg viewBox="0 0 24 24" fill="none" stroke="#4c607c" stroke-width="2"><rect x="2" y="1.500" width="20" height="13" rx="1.500"/><path d="M2 17.500h20M4 20h16M6 22.500h12M9 7.500l2.500 2.500L16 5.500"/></svg>Issues</a>
        <a class="list-group-item d-flex align-items-center"><svg viewBox="0 0 24 24" fill="none" stroke="#56627b" stroke-width="2" stroke-linejoin="round"><path d="M10 2.500q3-1.500 3.500 2l1 1.500 5-1.500 2 4-3 3q4 0 4 3.500l-2.500 2.500-3-.5q.5 4-2 5t-4-3q-1.500 2-4.500 2L4 18l1-3q-3-.5-3-3t3-3L7 10 5 6l3.500-2z"/></svg>Components</a>
        <a class="list-group-item d-flex align-items-center"><svg viewBox="0 0 24 24" fill="none" stroke="#56627b" stroke-width="2.200"><path d="M8 1H1.500Q0 1 0 3v6M16 1h6.500Q24 1 24 3v6M8 23H1.500Q0 23 0 21v-6M16 23h6.500q1.500 0 1.500-2v-6M9 7.500h9.500M9 12h9.500M11.500 16.500h7M5 7.500h2M5 12h2M8.500 16.500h1"/></svg>Structure</a>
        <a class="list-group-item d-flex align-items-center"><svg><use href="#xray"/></svg>Tests</a>
        <a class="list-group-item d-flex align-items-center"><svg><use href="#xray"/><path d="M21.500 13l3 4-1.500 1.500V24h-3v-5.500L18.500 17z" fill="#f4f3f8" stroke="#53545c" stroke-width="1.500"/></svg>Test Automation</a>
      </div>
      <svg class="collapser" width="17" height="15"><path d="M7.500 1.500l-6 6 6 6M15.500 1.500l-6 6 6 6" fill="none" stroke="#3f4a67" stroke-width="2.700"/></svg>
     </aside>
     <article class="doc">
      <h6>Acceptance Criteria:</h6>
      <ol>
       <li>There should be a tile labeled 'Orientation Checklist' prominently displayed on the<br>Customer Portal dashboard.</li>
       <li>The tile should accurately display the total number of steps in the checklist and indicate<br>the number of steps already completed.</li>
       <li>The checklist steps, accompanying sub-text descriptions and their redirection URLs<br>should remain unchanged from their current implementation.</li>
       <li>We see different set of steps for below type of users.<br>Scenario 1: OnPrem User<br>Scenario 2: SaaS User<br>Scenario 3: ISV Partner<br>Scenario 4: VAR Partner</li>
       <li>The logic for the steps implementation for various types of users should remain the<br>same.</li>
       <li>Steps that have been completed by the customer should automatically be marked as<br>checked based on existing logic.</li>
       <li>Steps that have not been completed should display an empty circle icon to the left of<br>the step text.</li>
       <li>This visual cue should clearly differentiate between completed and incomplete steps in<br>the checklist.</li>
       <li>The progress bar functionality should function as per existing specifications.</li>
       <li>The color scheme and text format of the 'Orientation Checklist' tile should adhere<br>strictly to the specified mockup design to ensure visual consistency with the portal.</li>
       <li>Ensure all existing logic related to the Orientation Checklist, including completion<br>tracking and user interactions, is fully implemented and functional in the new Customer</li>
      </ol>
     </article>
     <div class="gutter"><svg width="18" height="20" viewBox="0 0 18 20"><path d="M12 2q2-2 4-.5t.5 4L7 16l-5 2.500L3 12z" fill="#1d2b50"/></svg></div>
     <div class="sbar d-flex flex-column align-items-center"><svg width="12" height="10"><path d="M6 0l6 10H0z" fill="#8b8b8d"/></svg><div class="thumb"></div><svg width="12" height="10" class="mt-auto"><path d="M6 10l6-10H0z" fill="#8b8b8d"/></svg></div>
    </div>
   </div>
   <aside class="erail d-flex flex-column align-items-center">
     <div class="spot" style="height:54px"><svg width="21" height="22" viewBox="0 0 20 20"><circle cx="8" cy="8" r="6.800" fill="none" stroke="#777" stroke-width="2"/><path d="M13.500 14l5 5" stroke="#9a62d8" stroke-width="3.200"/></svg></div>
     <div class="spot" style="height:50px"><svg width="22" height="24" viewBox="0 0 22 24"><path d="M11 0L1 6v8l5 3V9l9-5z" fill="#3a78e0"/><path d="M11 0l10 6v9l-7-6V6l-4-2z" fill="#45b5ee"/><path d="M1 14v4l10 6 10-6v-6l-8 5-6-2V9z" fill="#7a52cf"/><path d="M21 10v8l-10 6-2-7 6-3z" fill="#c489e8"/><circle cx="11" cy="12" r="3.500" fill="#fff"/></svg></div>
     <div class="spot" style="height:50px"><svg width="22" height="22" viewBox="0 0 28 26"><use href="#outl"/></svg></div>
     <div class="spot" style="height:50px"><svg width="22" height="21" viewBox="0 0 26 24"><use href="#teams"/></svg></div>
     <hr style="margin-top:15px"><div class="spot" style="height:80px"><svg width="18" height="18"><path d="M9 1v17M1 9h17" stroke="#333" stroke-width="1.500"/></svg></div>
     <hr style="margin-top:337px"><div class="spot" style="height:58px"><svg class="i22" viewBox="0 0 22 22" fill="none" stroke="#333" stroke-width="1.600" stroke-linejoin="round"><path d="M9 1.500h4l.800 3 2.300 1.300 3-.8 2 3.400-2.200 2.200v1l2.200 2.200-2 3.400-3-.8-2.300 1.300-.8 3H9l-.8-3-2.300-1.300-3 .8-2-3.400L3.100 11.600v-1L.900 8.400l2-3.400 3 .8 2.300-1.300z"/><circle cx="11" cy="11" r="2.600"/></svg></div>
   </aside>
  </div>
 </div>

 <div class="rtask d-flex align-items-center">
   <div class="spot" style="width:86px;height:58px"><svg class="i28" viewBox="0 0 28 28"><circle cx="13" cy="14" r="13" fill="url(#gsun)"/><path d="M13 23a4 4 0 010-7 6 6 0 0110-1 4.500 4.500 0 015 8z" fill="#b8ccf5"/></svg><span class="bdg" style="background:#c42b1c;left:40px;top:8px">1</span></div>
   <div class="spot" style="width:126px;padding-left:60px"><svg class="i30"><use href="#win"/></svg></div>
   <div class="rsearch d-flex align-items-center" style="padding-left:13px"><svg class="i20 me-1" color="#333"><use href="#mag"/></svg><span style="margin-left:7px">Search</span><span class="mybmc spot ms-auto" style="margin-right:4px"><i>my</i>bmc</span></div>
   <div class="rt d-flex align-items-center" style="margin-left:3px">
     <div class="spot" style="padding-right:2px"><svg width="30" height="28"><use href="#tview"/></svg></div>
     <div class="spot dotmark"><svg width="31" height="28"><use href="#folder"/></svg></div>
     <div class="spot dotmark wide hl"><svg class="i30" viewBox="0 0 30 30"><use href="#edge"/><rect x="0" y="19" width="16" height="11" rx="1.500" fill="#b56a10"/><path d="M5 19v-2h6v2M0 24h16" fill="none" stroke="#e79a22" stroke-width="1.500"/></svg></div>
     <div class="spot dotmark"><svg width="34" height="30" viewBox="0 0 34 30"><svg y="3" width="29" height="27" viewBox="0 0 28 26"><use href="#outl"/></svg><path d="M17 0h19v14H17z" fill="#e9ac6e"/><path d="M17 0l9.500 8L36 0" fill="none" stroke="#fff3e2" stroke-width="1.600"/></svg></div>
     <div class="spot dotmark"><svg class="i30" viewBox="0 0 30 30"><path d="M22 8L4 23 0 20l1-2L20 1.500z" fill="#1a77c2"/><path d="M22 22L4 7 0 10l1 2L20 28.500z" fill="#2596e0"/><path d="M21 0l9 4v22l-9 4z" fill="#38a9f0"/></svg></div>
     <div class="spot dotmark"><svg width="30" height="24" viewBox="0 0 30 24"><svg width="30" height="24" preserveAspectRatio="none" viewBox="0 0 30 28"><use href="#term" width="30" height="28"/></svg></svg></div>
     <div class="spot dotmark"><svg width="28" height="28" viewBox="0 0 28 28"><rect width="28" height="28" fill="#3d2d24"/><circle cx="14" cy="14" r="11" fill="none" stroke="#e9832a" stroke-width="1.400"/><circle cx="14" cy="14" r="6" fill="none" stroke="#cdbba7" stroke-width="3" stroke-dasharray="5 1.300"/></svg></div>
     <div class="spot dotmark"><svg class="i30" viewBox="0 0 30 30"><circle cx="15" cy="15" r="15" fill="#fb6d38"/><path d="M7 25l3-6 5-7 4-1 1 2-4 4-5 4z" fill="#fff"/><circle cx="20.500" cy="8" r="2.800" fill="#fff"/></svg></div>
     <div class="spot dotmark"><svg class="i30" viewBox="0 0 30 30"><path d="M2 2h20v27H2z" fill="#f5f5f5" stroke="#888"/><path d="M2.500 14h22v15h-22z" fill="url(#gnpp)"/><path d="M4 2h18" stroke="#555" stroke-width="3" stroke-dasharray="1.500 1.500"/><path d="M7 18V9h3v9M13 13h3M17.500 13h3" stroke="#333" stroke-width="2" fill="none"/><path d="M28 1L18 21" stroke="#dc9a2c" stroke-width="4"/></svg></div>
     <div class="spot dotmark"><svg width="26" height="26" viewBox="0 0 26 26"><path d="M0 0h26v26H0z" fill="#2c68d8"/><path d="M0 26V0h14z" fill="#d9386d"/><path d="M0 26h18L4 14z" fill="#8c43c5"/><path d="M4 4h18v18H4z" fill="#0c0c0f"/><path d="M6 7h4M8 7v6M6 13h4M17.500 7h-5M15.500 7v4q0 2-3 2M6 19h7" fill="none" stroke="#fff" stroke-width="1.600"/></svg></div>
     <div class="spot dotmark"><svg class="i30" viewBox="0 0 30 30"><use href="#chrome"/></svg></div>
     <div class="spot dotmark"><svg class="i30" viewBox="0 0 30 30"><path d="M15 0l6.500 6.500L15 13 8.500 6.500z" fill="#f29a9c"/><path d="M23.500 8.500L30 15l-6.500 6.500L17 15z" fill="#93d67e"/><path d="M6.500 8.500L13 15l-6.500 6.500L0 15z" fill="#8fb9ec"/><path d="M15 17l6.500 6.500L15 30l-6.500-6.500z" fill="#fbe08a"/></svg></div>
     <div class="spot dotmark hl red"><svg class="i30" viewBox="0 0 28 26"><use href="#teams"/><path d="M8 18.500h20v7.500H8z" fill="#2bd6e8"/><text x="9.700" y="25" font-family="Open Sans" font-weight="700" font-size="7.500">NEW</text></svg><span class="bdg" style="background:#c42b1c;left:29px;top:8px;font-size:12.500px">9+</span></div>
     <div class="spot dotmark hl red"><svg class="i30" viewBox="0 0 30 30"><path d="M0 0h15v15H0z" fill="#f25022"/><path d="M15 0h15v15H15z" fill="#7fba00"/><path d="M0 15h15v15H0z" fill="#00a4ef"/><path d="M15 15h15v15H15z" fill="#fdb813"/></svg></div>
     <div class="spot dotmark"><span class="zmicon spot">zm</span></div>
   </div>
   <div class="d-flex align-items-center ms-auto">
     <div class="spot" style="width:40px"><svg class="i16"><path d="M2 11l6-6 6 6" fill="none" stroke="#333" stroke-width="1.800"/></svg></div>
     <div class="spot" style="width:40px"><svg class="i22" viewBox="0 0 22 18"><use href="#cloudg"/><path d="M1 1l19 16" stroke="#222" stroke-width="1.600"/></svg></div>
     <div class="spot" style="width:41px"><svg width="16" height="22"><use href="#mic"/></svg></div>
     <div class="spot" style="width:39px"><svg class="i22" viewBox="0 0 22 22" fill="none" stroke="#333" stroke-width="1.500"><path d="M14 2H3Q1.500 2 1.500 3.500v11Q1.500 16 3 16h12M7 16v4M12 16v4M4.500 20.500h11M15.500 2h5v6h-5zM18 8v13"/></svg></div>
     <div class="spot" style="width:23px"><svg class="i20"><use href="#spk"/></svg></div>
     <div class="clock text-nowrap" style="width:90px;padding-bottom:2px">12:08 PM<br>7/23/2024</div>
     <div class="spot" style="width:38px"><svg width="17" height="19"><use href="#bell"/></svg></div>
     <div style="width:16px"></div>
   </div>
 </div>
</main>
<div class="seam"></div>

<footer class="ltask d-flex align-items-center">
  <div class="spot" style="width:64px;padding-left:16px"><svg width="31" height="26" viewBox="0 0 31 26"><circle cx="20" cy="9" r="8.500" fill="#f7a823"/><path d="M7 25a6.500 6.500 0 010-13A9 9 0 0123 9a8 8 0 011 16z" fill="#b9d3f1"/><path d="M7 25a6.500 6.500 0 01-1-12l18 12z" fill="#8fb7e8"/></svg></div>
  <div class="text-nowrap wtext" style="width:439px">26°C<br><span>Mostly cloudy</span></div>
  <svg class="i30"><use href="#win"/></svg>
  <div class="lsearch d-flex align-items-center" style="margin-left:16px;padding-left:14px"><svg width="19" height="20" color="#222"><use href="#mag"/></svg><span style="margin-left:12px">Search</span>
    <svg class="ms-auto" style="margin-right:11px" width="50" height="32" viewBox="0 0 50 32"><path d="M0 0l14 10-3 4z" fill="#2c7484"/><path d="M9 13q6-6 14-4 8 4 13 4 5-1 7-4-4-1-3-6 3 1 4 4 1-5 5-6 1 8-4 11-5 9-15 11-12 1-19-4-4-3-2-6z" fill="#2a8a9c"/><path d="M10 18q8 2 14 0 8 2 14 0-6 6-14 6-10 0-14-6z" fill="#dcd6f0"/><path d="M13 21l-7 8 7-2 5-4zM22 21l6 11 3-10z" fill="#1f6f80"/><circle cx="17.500" cy="13" r="1.600" fill="#12303a"/></svg></div>
  <div class="lt d-flex align-items-center" style="margin-left:4px">
    <div class="spot"><svg width="30" height="28"><use href="#tview"/></svg></div>
    <div class="spot"><svg class="i30" viewBox="0 0 30 30"><path d="M9 0h9q3 0 4 4l1 3h-4q-3 0-4 4l-3 9q-1 3-4 3H5q-5 0-5-5 1-7 4-14Q5 0 9 0z" fill="url(#gcopA)"/><path d="M21 30h-9q-3 0-4-4l-1-3h4q3 0 4-4l3-9q1-3 4-3h3q5 0 5 5-1 7-4 14-1 4-5 4z" fill="url(#gcopB)"/></svg></div>
    <div class="spot"><svg class="i28" viewBox="0 0 28 28"><circle cx="17" cy="6" r="4.500" fill="#7b83eb"/><path d="M19 11h8v8q0 5-6 5z" fill="#5059c9"/><path d="M10 10h12v9q-1 7-7 8-5-1-5-7z" fill="#7b83eb"/><path d="M1 7h14v15H1z" fill="#fff"/><path d="M4 11h8M8 11v8" stroke="#4b53bc" stroke-width="2"/></svg><span class="bdg" style="background:#0078d4;left:28px;top:8px">1</span></div>
    <div class="spot dotmark"><svg width="30" height="28"><use href="#folder"/></svg></div>
    <div class="spot dotmark"><svg class="i30" viewBox="0 0 30 30"><use href="#edge"/></svg></div>
    <div class="spot"><svg class="i30"><use href="#chrome"/></svg></div>
    <div class="spot dotmark"><svg class="i30"><use href="#chrome"/></svg><span class="bdg" style="background:#0b8070;left:28px;top:8px;font-size:11px">M</span></div>
    <div class="spot dotmark"><svg width="30" height="24" viewBox="0 0 30 24"><svg width="30" height="24" preserveAspectRatio="none" viewBox="0 0 30 28"><use href="#term" width="30" height="28"/></svg></svg></div>
    <div class="spot dotmark"><svg width="21" height="21" viewBox="0 0 21 21"><rect width="21" height="21" rx="4" fill="#fa0f00"/><path d="M4.500 16L9 5h3l4.500 11h-3L10.500 9l-2 4.500h2l1 2.500z" fill="#fff"/></svg></div>
    <div class="spot dotmark"><svg class="i30" viewBox="0 0 30 30"><path d="M2 28l2-7.500A13 13 0 1110 26z" fill="none" stroke="#1d8a55" stroke-width="2.400"/><path d="M10 8l3 .5 1 4-1.500 1.500q1.500 3 4.500 4l2-1.500 3.500 1.500q0 4-4.500 4Q9 20 8.500 11q0-2 1.500-3z" fill="#1d8a55"/></svg><span class="bdg" style="background:#0078d4;left:29px;top:8px">1</span></div>
    <div class="spot dotmark"><span class="zmicon zmbig spot">zoom</span></div>
  </div>
  <div class="d-flex align-items-center ms-auto">
    <div class="spot" style="width:40px"><svg width="21" height="15"><use href="#cloudg"/></svg></div>
    <div class="spot" style="width:40px"><svg width="16" height="22"><use href="#mic"/></svg></div>
    <div class="clock text-center" style="width:56px;padding-bottom:2px">ENG<br>IN</div>
    <div class="spot" style="width:39px"><svg width="21" height="17" viewBox="0 0 21 17" fill="none" stroke="#222" stroke-width="1.500"><path d="M1 6q9.500-9.500 19 0M4 9.500q6.500-6.500 13 0M7 12.500q3.500-3.500 7 0"/><circle cx="10.500" cy="15" r="1.200" fill="#222"/></svg></div>
    <div class="spot" style="width:22px"><svg class="i20"><use href="#spk"/></svg></div>
    <div class="spot" style="width:40px"><svg width="21" height="14" viewBox="0 0 21 14"><rect x="1" y="1" width="17" height="12" rx="3" fill="none" stroke="#222" stroke-width="1.500"/><path d="M3.500 3.500h9v7h-9z" fill="#222"/><path d="M19 5h1.500v4H19z" fill="#222"/></svg></div>
    <div class="clock text-nowrap" style="width:86px;padding-bottom:2px">12:08<br>23-07-2024</div>
    <div class="spot" style="width:39px"><svg width="17" height="19"><use href="#bell"/></svg></div>
    <div style="width:15px"></div>
  </div>
</footer>
<script src="https://cdn.jsdelivr.net/npm/bootstrap@5.3.0/dist/js/bootstrap.bundle.min.js"></script>
</body>
</html>
